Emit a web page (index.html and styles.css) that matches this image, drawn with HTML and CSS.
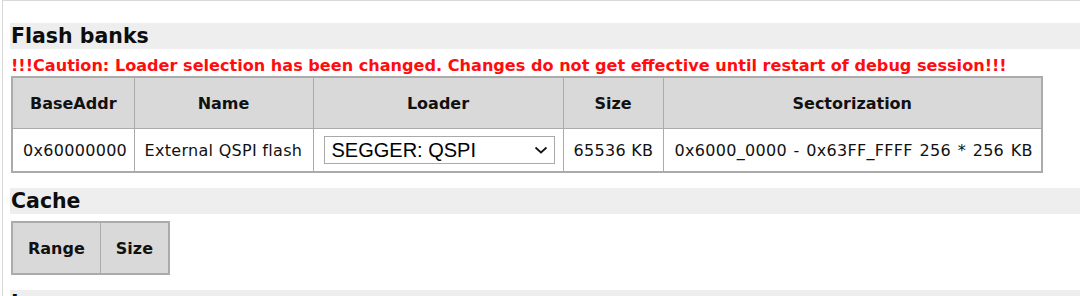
FILE: index.html
```html
<!DOCTYPE html>
<html>
<head>
<meta charset="utf-8">
<link rel="stylesheet" href="styles.css">
</head>
<body>
<div class="frame">
  <h2 class="band">Flash banks</h2>
  <div class="caution">!!!Caution: Loader selection has been changed. Changes do not get effective until restart of debug session!!!</div>
  <table class="grid flash">
    <colgroup>
      <col class="c-addr"><col class="c-name"><col class="c-loader"><col class="c-size"><col class="c-sect">
    </colgroup>
    <tr><th>BaseAddr</th><th>Name</th><th>Loader</th><th>Size</th><th>Sectorization</th></tr>
    <tr>
      <td>0x60000000</td>
      <td>External QSPI flash</td>
      <td><div class="select"><span>SEGGER: QSPI</span><svg width="14" height="8" viewBox="0 0 14 8"><path d="M1.5 1.5 L7 6.5 L12.5 1.5" fill="none" stroke="#111" stroke-width="1.7"/></svg></div></td>
      <td>65536 KB</td>
      <td class="sect">0x6000_0000 - 0x63FF_FFFF 256 * 256 KB</td>
    </tr>
  </table>
  <h2 class="band">Cache</h2>
  <table class="grid">
    <tr><th>Range</th><th>Size</th></tr>
  </table>
  <h2 class="band">I</h2>
</div>
</body>
</html>
```

FILE: styles.css
```css
html, body {
  margin: 0;
  padding: 0;
  background: #fff;
}
body {
  font-family: "DejaVu Sans", Verdana, sans-serif;
  color: #111;
  height: 296px;
  overflow: hidden;
}
.frame {
  border-top: 1px solid #d8d8d8;
  border-left: 1px solid #d8d8d8;
  margin-left: 2px;
  padding: 22px 0 0 7px;
}
.band {
  margin: 0 0 7px;
  background: #eeeeee;
  font-size: 20.5px;
  font-weight: bold;
  line-height: 26px;
  height: 26px;
  padding-left: 1px;
  color: #0d0d0d;
}
.caution {
  color: #ff0d0d;
  font-weight: bold;
  font-size: 16.1px;
  line-height: 19px;
  margin: 0 0 1px 1px;
}
.grid {
  border-collapse: collapse;
  border: 2px solid #ababab;
  margin: 0 0 15px 1px;
}
.grid.flash {
  table-layout: fixed;
  width: 1032px;
}
.c-addr { width: 122px; }
.c-name { width: 179px; }
.c-loader { width: 250px; }
.c-size { width: 100px; }
.c-sect { width: 379px; }
.grid th, .grid td {
  border: 1px solid #ababab;
  line-height: 19px;
  white-space: nowrap;
}
.grid th {
  background: #d9d9d9;
  font-size: 16px;
  font-weight: bold;
  padding: 16px 15px 15px;
}
.grid td {
  font-size: 16px;
  letter-spacing: 0.3px;
  padding: 7px 10px;
  background: #fff;
}
.grid td.sect {
  word-spacing: 1.3px;
  padding: 7px 9px 7px 11px;
}
.select {
  display: flex;
  align-items: center;
  justify-content: space-between;
  box-sizing: border-box;
  width: 231px;
  height: 28px;
  border: 1px solid #a9a9a9;
  padding: 0 6px 0 7px;
  font-family: "Liberation Sans", Arial, sans-serif;
  font-size: 20px;
  letter-spacing: 0;
  color: #000;
}
.select svg {
  display: block;
}
```
